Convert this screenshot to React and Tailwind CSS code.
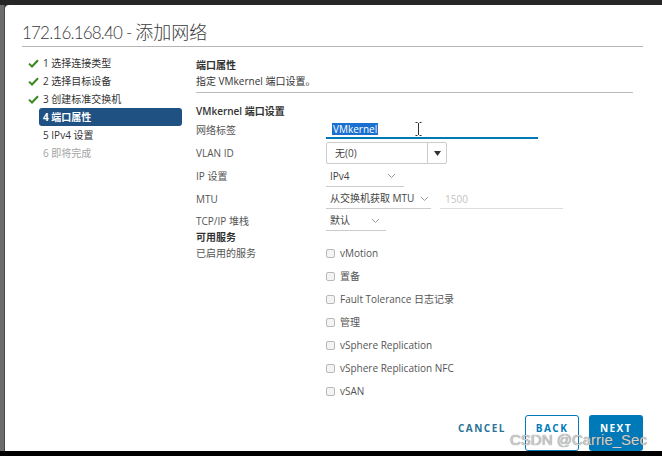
import React from 'react';

const navItems = [
  { n: 1, label: '选择连接类型', done: true },
  { n: 2, label: '选择目标设备', done: true },
  { n: 3, label: '创建标准交换机', done: true },
  { n: 4, label: '端口属性', active: true },
  { n: 5, label: 'IPv4 设置' },
  { n: 6, label: '即将完成', disabled: true },
];

const services = [
  'vMotion',
  '置备',
  'Fault Tolerance 日志记录',
  '管理',
  'vSphere Replication',
  'vSphere Replication NFC',
  'vSAN',
];

const Check = () => (
  <svg width="11" height="9" viewBox="0 0 11 9" className="ml-[6px]">
    <path d="M1 4.6 L4 7.5 L10 1.2" fill="none" stroke="#3c8a1e" strokeWidth="2" />
  </svg>
);

const Chevron = () => (
  <svg width="9" height="6" viewBox="0 0 9 6" className="shrink-0">
    <path d="M1 1 L4.5 4.5 L8 1" fill="none" stroke="#9a9a9a" strokeWidth="1" />
  </svg>
);

const App = () => {
  return (
    <div
      className="w-[662px] h-[456px] flex flex-col overflow-hidden bg-[#262626] text-[10px] text-[#555]"
      style={{ fontFamily: '"Open Sans", "Noto Sans CJK SC", sans-serif' }}
    >
      <div className="h-[5px] shrink-0 bg-[#262626]" />
      <div className="h-[446px] shrink-0 flex">
        <div className="w-[5px] shrink-0 bg-[#6c6c6c] border-r border-[#4a4a4a]" />
        <div className="flex-1 relative bg-white rounded-tl-[4px] pl-[17px] pr-[19px] pt-[13px] overflow-hidden">
          <h1
            className="h-[29px] leading-[28px] font-light text-[#3a3a3a] border-b border-[#b5b5b5] whitespace-nowrap"
            style={{ fontFamily: 'Lato, "Noto Sans CJK SC", sans-serif' }}
          >
            <span className="text-[17px] tracking-[-0.8px]">172.16.168.40 - </span>
            <span className="text-[18px]">添加网络</span>
          </h1>

          <div className="flex">
            {/* wizard steps */}
            <nav className="w-[174px] shrink-0 pt-[7px]">
              {navItems.map((it) => (
                <div key={it.n} className="flex items-center h-[18px]">
                  <div className="w-[17px] shrink-0 flex items-center">{it.done && <Check />}</div>
                  <div
                    className={
                      it.active
                        ? 'w-[143px] h-[18px] leading-[18px] pl-[4px] rounded-[3px] bg-[#1f5283] text-white font-bold'
                        : it.disabled
                        ? 'pl-[4px] leading-[18px] text-[#a3a3a3]'
                        : 'pl-[4px] leading-[18px] text-[#333]'
                    }
                  >
                    {it.n} {it.label}
                  </div>
                </div>
              ))}
            </nav>

            {/* form */}
            <div className="flex-1 pr-[10px]">
              <div className="pt-[10px] pb-[3px] border-b border-[#bbb]">
                <div className="leading-[16px] font-semibold text-[#333]">端口属性</div>
                <div className="leading-[16px] text-[#333]">指定 VMkernel 端口设置。</div>
              </div>
              <div className="mt-[10px] leading-[16px] font-semibold text-[#333]">VMkernel 端口设置</div>

              <div className="flex items-center h-[22px]">
                <div className="w-[130px] shrink-0">网络标签</div>
                <div className="relative self-start mt-[1px] w-[212px] h-[19px] border-b-2 border-[#0079b8] flex items-center pl-[6px]">
                  <span className="bg-[#1a6fd0] text-white leading-[12px] px-[1px]">VMkernel</span>
                  <svg width="7" height="14" viewBox="0 0 7 14" className="absolute left-[89px] top-[2px]">
                    <path d="M0.5 0.5 H2.5 M4.5 0.5 H6.5 M3.5 1 V13 M0.5 13.5 H2.5 M4.5 13.5 H6.5" fill="none" stroke="#333" strokeWidth="1" />
                  </svg>
                </div>
              </div>

              <div className="flex items-center h-[24px]">
                <div className="w-[130px] shrink-0">VLAN ID</div>
                <div className="w-[121px] h-[22px] border border-[#ccc] rounded-[2px] flex">
                  <div className="flex-1 pl-[8px] leading-[20px] text-[#444]">无(0)</div>
                  <div className="w-[19px] border-l border-[#ccc] flex items-center justify-center">
                    <svg width="7" height="5" viewBox="0 0 7 5">
                      <path d="M0 0 H7 L3.5 5 Z" fill="#333" />
                    </svg>
                  </div>
                </div>
              </div>

              <div className="flex items-center h-[23px]">
                <div className="w-[130px] shrink-0">IP 设置</div>
                <div className="w-[78px] h-[20px] border-b border-[#ccc] flex items-center justify-between pl-[4px] pr-[8px] text-[#444]">
                  <span>IPv4</span>
                  <Chevron />
                </div>
              </div>

              <div className="flex items-center h-[22px]">
                <div className="w-[130px] shrink-0">MTU</div>
                <div className="w-[105px] h-[20px] border-b border-[#ccc] flex items-center justify-between pl-[4px] pr-[2px] text-[#444] whitespace-nowrap">
                  <span>从交换机获取 MTU</span>
                  <Chevron />
                </div>
                <div className="ml-[9px] w-[123px] h-[20px] border-b border-[#ddd] pl-[5px] leading-[20px] text-[#c4c4c4]">1500</div>
              </div>

              <div className="flex items-center h-[22px]">
                <div className="w-[130px] shrink-0">TCP/IP 堆栈</div>
                <div className="w-[60px] h-[20px] border-b border-[#ccc] flex items-center justify-between pl-[4px] pr-[6px] text-[#444]">
                  <span>默认</span>
                  <Chevron />
                </div>
              </div>

              <div className="h-[10px] leading-[10px] font-semibold text-[#333]">可用服务</div>

              <div className="flex">
                <div className="w-[130px] shrink-0 h-[23px] leading-[23px]">已启用的服务</div>
                <div>
                  {services.map((s) => (
                    <div key={s} className="h-[23px] flex items-center">
                      <span className="w-[9px] h-[9px] border border-[#b8b8b8] rounded-[2px] bg-[#f4f4f4] mr-[5px]" />
                      <span>{s}</span>
                    </div>
                  ))}
                </div>
              </div>
            </div>
          </div>

          <div className="mt-[12px] flex justify-end items-start">
            <button className="h-[26px] leading-[26px] text-[10px] font-bold tracking-[1.5px] text-[#2b7396] mr-[19px]">
              CANCEL
            </button>
            <button className="w-[54px] h-[36px] flex justify-center items-start border border-[#0079b8] rounded-[3px] text-[10px] font-bold tracking-[1.5px] text-[#0079b8] mr-[10px]">
              <span className="leading-[25px]">BACK</span>
            </button>
            <button className="w-[54px] h-[36px] flex justify-center items-start rounded-[3px] bg-[#0079b8] text-[10px] font-bold tracking-[1.5px] text-white">
              <span className="leading-[26px]">NEXT</span>
            </button>
          </div>

          <div
            className="absolute left-[505px] top-[426px] text-[15px] leading-[18px] text-[#d0d0d0] [text-shadow:0_0_1px_#555]"
            style={{ fontFamily: '"Liberation Sans", sans-serif' }}
          >
            CSDN @Carrie_Sec
          </div>
        </div>
      </div>
      <div className="h-[5px] shrink-0 bg-black" />
    </div>
  );
};

export default App;
